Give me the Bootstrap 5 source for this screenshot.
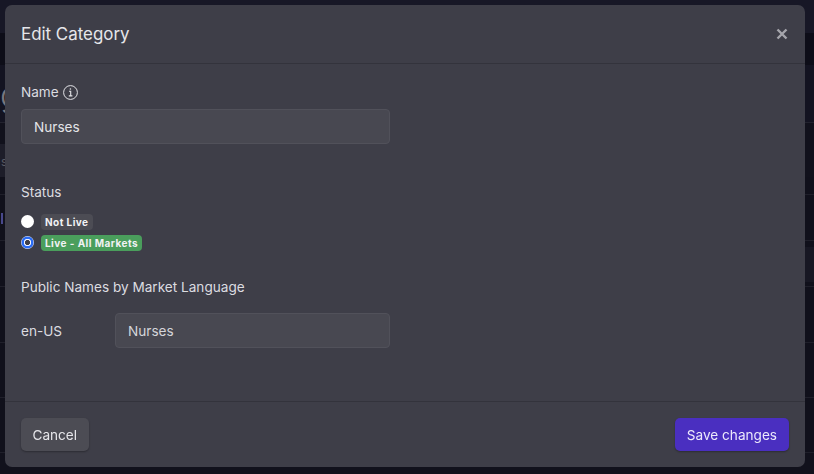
<!DOCTYPE html>
<html lang="en">
<head>
<meta charset="utf-8">
<title>Edit Category</title>
<link href="https://cdn.jsdelivr.net/npm/bootstrap@5.3.0/dist/css/bootstrap.min.css" rel="stylesheet">
<style>
html,body{height:100%;overflow:hidden}
body{background:#11111c;font-family:Inter,"Liberation Sans",sans-serif;color:#e4e4e8}
.pg-top{height:33px;background:#171726}
.pg-dark{height:32px;background:#0d0d18}
.pg-hero{height:58px;background:#131321;border-bottom:1px solid #22222e;color:#77777f;font-size:34px;font-weight:300;line-height:60px;padding-left:0;overflow:hidden}
.pg-gap{height:21px;background:#11111c}
.pg-band{height:33px;background:#11111c}
.pg-input{width:30px;height:33px;background:#1d1d29;color:#5a5a63;font-size:12px;line-height:36px;padding-left:1px}
.pg-row{background:#10101b;border-bottom:1px solid #1f1f2a}
.pg-r1{height:18px}
.pg-r2{height:46px;padding-top:18px;border-top:0}
.pg-mark{display:block;width:2px;height:11px;background:#48488c;margin-left:1px}
.pg-r3{height:46px;padding-top:6px}
.pg-pager{width:30px;height:35px;background:#171723}
.pg-r4{height:56px}.pg-r5{height:55px}.pg-r6{height:55px}
.edit-modal{position:fixed;left:5px;top:5px;width:800px;height:462px;background:#3e3e48;border-radius:7px;display:flex;flex-direction:column;border:0}
.edit-head{height:59px;padding:0 16px;border-bottom:1px solid #33333c;flex:none}
.edit-title{font-size:16.9px;font-weight:400;color:#e6e6ea;margin:1px 0 0}
.edit-x{background:none;border:0;padding:0;width:14px;height:14px;display:block}
.edit-x svg{display:block}
.edit-body{flex:1 1 auto;padding:0 16px}
.edit-foot{height:66px;border-top:1px solid #33333c;padding:0 16px;flex:none}
.lbl{font-size:13.6px;line-height:20px;color:#dcdce0}
.name-lbl{margin-top:18px;margin-bottom:7px;gap:4px}
.status-lbl{margin-top:38px;margin-bottom:9px}
.public-lbl{margin-top:24px;margin-bottom:16px}
.field{width:369px;height:35px;background:#484851;border:1px solid #51515a;border-radius:4px;color:#e4e4e8;font-size:13.6px;padding:0 12px;box-shadow:none}
.field:focus{background:#484851;color:#e4e4e8;border-color:#51515a;box-shadow:none}
.field-lang{width:275px;color:#d5d5da}
.field-lang:focus{color:#d5d5da}
.lang{width:94px;font-size:13.6px;color:#dcdce0;padding-top:1px}
.radio{width:13px;height:13px;margin:0;background-color:#fff;border:0;flex:none}
.radio:checked{background-color:transparent;border:0;background-image:radial-gradient(circle at center,#3e3e48 0,#3e3e48 2.2px,#f2f5ff 2.9px,#f2f5ff 3.4px,#2a6cf5 4px,#2a6cf5 5.6px,#cfdcff 6.2px,#cfdcff 6.5px)}
.radio-row{height:21px;gap:7px}
.tag{font-size:10px;font-weight:700;line-height:16px;height:16px;padding:0 4px;border-radius:4px;color:#f2f2f4;letter-spacing:.45px}
.tag-off{background:#4c4c54}
.tag-on{background:#4a9e5c}
.act{height:33px;font-size:13.6px;padding:1px 11.5px 0;border-radius:5px;border:0;color:#e6e6ea;box-shadow:0 1px 2px rgba(0,0,0,.3)}
.act-cancel{background:#4c4c54}
.act-cancel:hover{background:#4c4c54;color:#e6e6ea}
.act-save{background:#4a2fc0;color:#ece9fb;padding:1px 12px 0}
.act-save:hover{background:#4a2fc0;color:#ece9fb}
</style>
</head>
<body>
<div aria-hidden="true">
  <div class="pg-top"></div>
  <div class="pg-dark"></div>
  <div class="pg-hero">g</div>
  <div class="pg-gap"></div>
  <div class="pg-band"><div class="pg-input">s</div></div>
  <div class="pg-row pg-r1"></div>
  <div class="pg-row pg-r2"><span class="pg-mark"></span></div>
  <div class="pg-row pg-r3 d-flex justify-content-end"><div class="pg-pager"></div></div>
  <div class="pg-row pg-r4"></div>
  <div class="pg-row pg-r5"></div>
  <div class="pg-row pg-r6"></div>
</div>
<div class="edit-modal">
  <div class="edit-head d-flex align-items-center justify-content-between">
    <h5 class="edit-title">Edit Category</h5>
    <button class="edit-x" type="button" aria-label="Close"><svg width="14" height="14" viewBox="0 0 14 14"><path d="M2.5 2.5l9 9M11.5 2.5l-9 9" stroke="#a5a5ac" stroke-width="2.4" fill="none"/></svg></button>
  </div>
  <div class="edit-body">
    <div class="lbl name-lbl d-flex align-items-center">Name
      <svg width="15" height="15" viewBox="0 0 15 15" fill="none" stroke="#e4e4e8"><circle cx="7.5" cy="7.5" r="6.9" stroke-width="1"/><path d="M6 6.3h1.7v4.5M5.8 10.9h3.6" stroke-width="1.1"/><circle cx="7.4" cy="4" r=".8" fill="#e4e4e8" stroke="none"/></svg>
    </div>
    <input class="form-control field" type="text" value="Nurses">
    <div class="lbl status-lbl">Status</div>
    <div class="d-flex align-items-center radio-row">
      <input class="form-check-input radio" type="radio" name="st" aria-label="Not Live">
      <span class="tag tag-off">Not Live</span>
    </div>
    <div class="d-flex align-items-center radio-row">
      <input class="form-check-input radio" type="radio" name="st" checked aria-label="Live - All Markets">
      <span class="tag tag-on">Live - All Markets</span>
    </div>
    <div class="lbl public-lbl">Public Names by Market Language</div>
    <div class="d-flex align-items-center">
      <div class="lang">en-US</div>
      <input class="form-control field field-lang" type="text" value="Nurses">
    </div>
  </div>
  <div class="edit-foot d-flex align-items-center justify-content-between">
    <button class="btn act act-cancel" type="button">Cancel</button>
    <button class="btn act act-save" type="button">Save changes</button>
  </div>
</div>
<script src="https://cdn.jsdelivr.net/npm/bootstrap@5.3.0/dist/js/bootstrap.bundle.min.js"></script>
</body>
</html>
